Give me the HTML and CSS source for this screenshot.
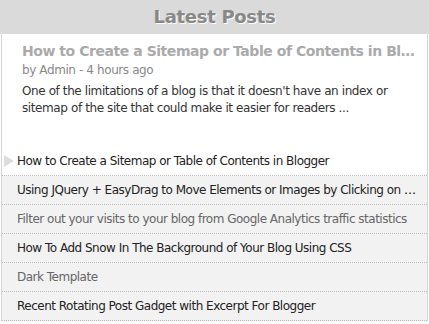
FILE: index.html
```html
<!DOCTYPE html>
<html lang="en">
<head>
    <meta charset="UTF-8">
    <meta name="viewport" content="width=device-width, initial-scale=1.0">
    <title>Latest Posts</title>
    <link rel="stylesheet" href="styles.css">
</head>
<body>
    <div class="widget">
        <h2 class="widget-title">Latest Posts</h2>

        <div class="widget-body">
            <div class="featured">
                <a class="featured-title" href="#">How to Create a Sitemap or Table of Contents in Blogger</a>
                <div class="meta">by Admin - 4 hours ago</div>
                <p class="snippet">One of the limitations of a blog is that it doesn't have an index or sitemap of the site that could make it easier for readers ...</p>
            </div>

            <ul class="post-list">
                <li class="active"><a href="#">How to Create a Sitemap or Table of Contents in Blogger</a></li>
                <li><a href="#">Using JQuery + EasyDrag to Move Elements or Images by Clicking on Them</a></li>
                <li><a class="visited" href="#">Filter out your visits to your blog from Google Analytics traffic statistics</a></li>
                <li><a href="#">How To Add Snow In The Background of Your Blog Using CSS</a></li>
                <li><a class="visited" href="#">Dark Template</a></li>
                <li><a href="#">Recent Rotating Post Gadget with Excerpt For Blogger</a></li>
            </ul>
        </div>
    </div>
</body>
</html>
```

FILE: styles.css
```css
body {
    margin: 0;
    background-color: white;
    font-family: "DejaVu Sans", Verdana, sans-serif;
}
.widget {
    width: 429px;
}
.widget-title {
    margin: 0;
    height: 34px;
    line-height: 34px;
    background-color: #dadada;
    color: #888;
    text-shadow: 1px 1px 0 #fff;
    text-align: center;
    font-size: 18px;
    font-weight: bold;
    letter-spacing: -0.3px;
}
.widget-body {
    margin: 0 1px;
    border-left: 1px solid #d4d4d4;
    border-right: 1px solid #d4d4d4;
    background-color: #f2f2f2;
}
.featured {
    background-color: white;
    padding: 6px 7px 0 20px;
    height: 107px;
}
.featured-title {
    display: block;
    color: #aaa;
    font-size: 14px;
    font-weight: bold;
    letter-spacing: -0.45px;
    text-decoration: none;
    white-space: nowrap;
    overflow: hidden;
    text-overflow: ellipsis;
    line-height: 22px;
}
.meta {
    color: #888;
    font-size: 12px;
    letter-spacing: -0.4px;
    line-height: 17px;
}
.snippet {
    margin: 4px 0 0;
    color: #333;
    font-size: 12px;
    letter-spacing: -0.4px;
    line-height: 17px;
}
.post-list {
    list-style: none;
    margin: 0;
    padding: 0;
}
.post-list li {
    height: 28px;
    line-height: 28px;
    padding: 0 10px 0 15px;
    border-bottom: 1px dotted #bbb;
    font-size: 12px;
    letter-spacing: -0.5px;
    white-space: nowrap;
    overflow: hidden;
    text-overflow: ellipsis;
}
.post-list li.active {
    position: relative;
    background-color: white;
}
.post-list li.active::before {
    content: "";
    position: absolute;
    left: 2px;
    top: 8px;
    border-left: 10px solid #ddd;
    border-top: 6px solid transparent;
    border-bottom: 6px solid transparent;
}
.post-list a {
    color: #222;
    text-decoration: none;
}
.post-list a.visited {
    color: #666;
}
```
